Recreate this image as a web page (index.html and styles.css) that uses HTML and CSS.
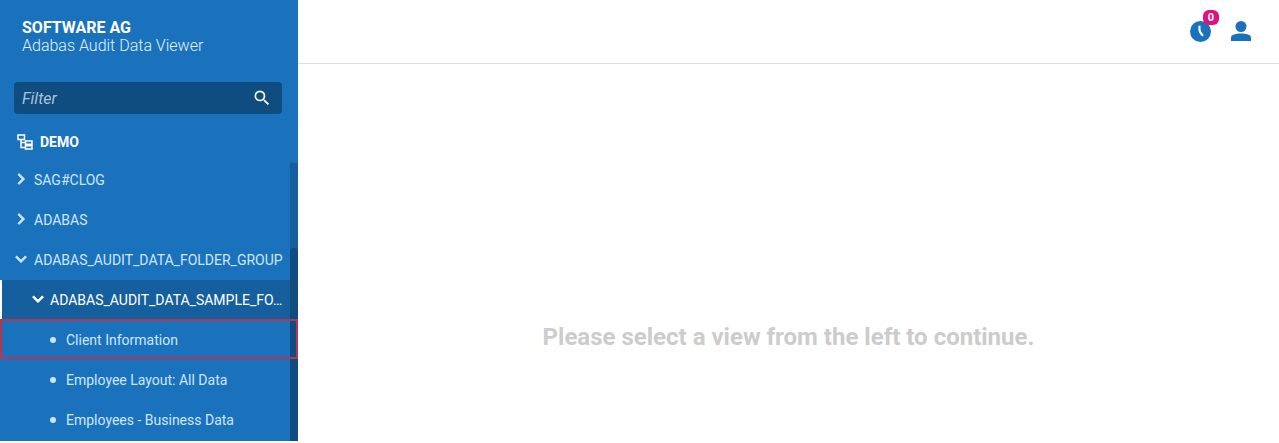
FILE: index.html
```html
<!DOCTYPE html>
<html lang="en">
<head>
    <meta charset="UTF-8">
    <meta name="viewport" content="width=device-width, initial-scale=1.0">
    <title>Adabas Audit Data Viewer</title>
    <link rel="stylesheet" href="styles.css">
</head>
<body>
    <div class="app">
        <aside class="sidebar">
            <div class="brand">
                <div class="brand-company">SOFTWARE AG</div>
                <div class="brand-product">Adabas Audit Data Viewer</div>
            </div>
            <div class="filter">
                <span class="filter-text">Filter</span>
                <svg class="filter-icon" viewBox="0 0 24 24" width="20" height="20"><path fill="#fff" d="M15.5 14h-.79l-.28-.27A6.47 6.47 0 0 0 16 9.5 6.5 6.5 0 1 0 9.5 16c1.61 0 3.09-.59 4.23-1.57l.27.28v.79l5 4.99L20.49 19l-4.99-5zm-6 0C7.01 14 5 11.99 5 9.5S7.01 5 9.5 5 14 7.01 14 9.5 11.99 14 9.5 14z"/></svg>
            </div>
            <div class="root">
                <svg class="root-icon" viewBox="0 0 16 16" width="16" height="16"><path fill="none" stroke="#fff" stroke-width="1.500" d="M1 1h6.500v4.500H1zM8.500 7H15v3.200H8.500zM8.500 11.800H15V15H8.500zM4 5.500V13.400h4.500M4 8.600h4.500"/></svg>
                <span>DEMO</span>
            </div>
            <div class="tree">
                <ul class="tree-list">
                    <li class="row">
                        <svg class="chevron" viewBox="0 0 24 24" width="22" height="22"><path fill="#cfe6fa" stroke="#cfe6fa" stroke-width=".8" d="M8.590 16.590 13.170 12 8.590 7.410 10 6l6 6-6 6z"/></svg>
                        <span class="label">SAG#CLOG</span>
                    </li>
                    <li class="row">
                        <svg class="chevron" viewBox="0 0 24 24" width="22" height="22"><path fill="#cfe6fa" stroke="#cfe6fa" stroke-width=".8" d="M8.590 16.590 13.170 12 8.590 7.410 10 6l6 6-6 6z"/></svg>
                        <span class="label">ADABAS</span>
                    </li>
                    <li class="row">
                        <svg class="chevron" viewBox="0 0 24 24" width="22" height="22"><path fill="#cfe6fa" stroke="#cfe6fa" stroke-width=".8" d="M7.410 8.590 12 13.170l4.590-4.580L18 10l-6 6-6-6z"/></svg>
                        <span class="label">ADABAS_AUDIT_DATA_FOLDER_GROUP</span>
                    </li>
                    <li class="row row-open">
                        <svg class="chevron" viewBox="0 0 24 24" width="22" height="22"><path fill="#fff" stroke="#fff" stroke-width=".8" d="M7.410 8.590 12 13.170l4.590-4.580L18 10l-6 6-6-6z"/></svg>
                        <span class="label">ADABAS_AUDIT_DATA_SAMPLE_FO…</span>
                    </li>
                    <li class="row row-leaf row-marked"><i class="dot"></i><span class="label">Client Information</span></li>
                    <li class="row row-leaf"><i class="dot"></i><span class="label">Employee Layout: All Data</span></li>
                    <li class="row row-leaf"><i class="dot"></i><span class="label">Employees - Business Data</span></li>
                </ul>
                <div class="scroll-track"><div class="scroll-thumb"></div></div>
            </div>
        </aside>
        <main class="main">
            <header class="topbar">
                <div class="history">
                    <svg viewBox="0 0 20 20" width="21" height="21"><circle cx="10" cy="10" r="10" fill="#1a72bd"/><path fill="none" stroke="#fff" stroke-width="2" d="M9 4.500v3.500q0 3 3.500 6"/></svg>
                    <span class="badge">0</span>
                </div>
                <svg class="user" viewBox="0 0 20 20" width="20" height="20"><circle cx="10" cy="5.500" r="5.500" fill="#1a72bd"/><path fill="#1a72bd" d="M0 20v-3.500C0 13.500 5 12.500 10 12.500s10 1 10 4V20z"/></svg>
            </header>
            <div class="empty">Please select a view from the left to continue.</div>
        </main>
    </div>
</body>
</html>
```

FILE: styles.css
```css
html, body {
    margin: 0;
    height: 100%;
    overflow: hidden;
}
body {
    font-family: Roboto, "Liberation Sans", sans-serif;
    background: #fff;
}
.app {
    display: flex;
    height: 443px;
}
.sidebar {
    width: 298px;
    height: 441px;
    flex: none;
    display: flex;
    flex-direction: column;
    background: #1a72bd;
    color: #fff;
}
.brand {
    padding: 19px 22px 0;
    height: 63px;
    box-sizing: border-box;
    font-size: 16px;
    line-height: 18px;
}
.brand-company {
    font-weight: 700;
}
.brand-product {
    font-weight: 300;
    color: #e3f1fc;
}
.filter {
    margin: 19px 16px 0 14px;
    height: 32px;
    padding: 0 10px 0 8px;
    display: flex;
    align-items: center;
    justify-content: space-between;
    background: #0f4c80;
    border-radius: 4px;
}
.filter-text {
    font-size: 16px;
    font-style: italic;
    color: #a9c3da;
}
.root {
    height: 46px;
    box-sizing: border-box;
    padding: 10px 0 0 17px;
    display: flex;
    align-items: center;
    gap: 7px;
    font-size: 14px;
    font-weight: 700;
}
.tree {
    flex: 1;
    display: flex;
    min-height: 0;
    overflow: hidden;
}
.tree-list {
    list-style: none;
    margin: 0;
    padding: 0;
    flex: 1;
    min-width: 0;
}
.row {
    position: relative;
    height: 40px;
    padding-left: 10px;
    display: flex;
    align-items: center;
    gap: 2px;
    font-size: 14px;
    color: #cfe6fa;
}
.chevron {
    flex: none;
    margin-top: -3px;
}
.label {
    white-space: nowrap;
}
.row-open {
    border-left: 2px solid #fff;
    padding-left: 25px;
    gap: 1px;
    background: #165f9e;
    color: #fff;
}
.row-leaf {
    padding-left: 50px;
    gap: 10px;
}
.dot {
    width: 6px;
    height: 6px;
    border-radius: 50%;
    background: #cfe6fa;
}
.row-marked::after {
    content: "";
    position: absolute;
    left: 0;
    top: -1px;
    width: 298px;
    height: 40px;
    box-sizing: border-box;
    border: 2px solid #b5364f;
}
.scroll-track {
    width: 8px;
    flex: none;
    margin-top: 3px;
    background: #165f9e;
    display: flex;
    flex-direction: column;
    justify-content: flex-end;
}
.scroll-thumb {
    height: 193px;
    border-radius: 4px 4px 0 0;
    background: #0f4c80;
}
.main {
    flex: 1;
    display: flex;
    flex-direction: column;
}
.topbar {
    height: 64px;
    box-sizing: border-box;
    border-bottom: 1px solid #dcdcdc;
    display: flex;
    align-items: center;
    justify-content: flex-end;
    gap: 20px;
    padding: 0 28px 1px 0;
}
.history {
    position: relative;
    height: 21px;
}
.badge {
    position: absolute;
    top: -11px;
    left: 13px;
    width: 16px;
    height: 15px;
    border-radius: 6px;
    background: #e0107f;
    color: #fff;
    font-size: 11px;
    font-weight: 700;
    line-height: 15px;
    text-align: center;
}
.empty {
    flex: 1;
    display: flex;
    align-items: center;
    justify-content: center;
    padding-top: 167px;
    font-size: 24px;
    font-weight: 700;
    color: #cccccc;
}
```
